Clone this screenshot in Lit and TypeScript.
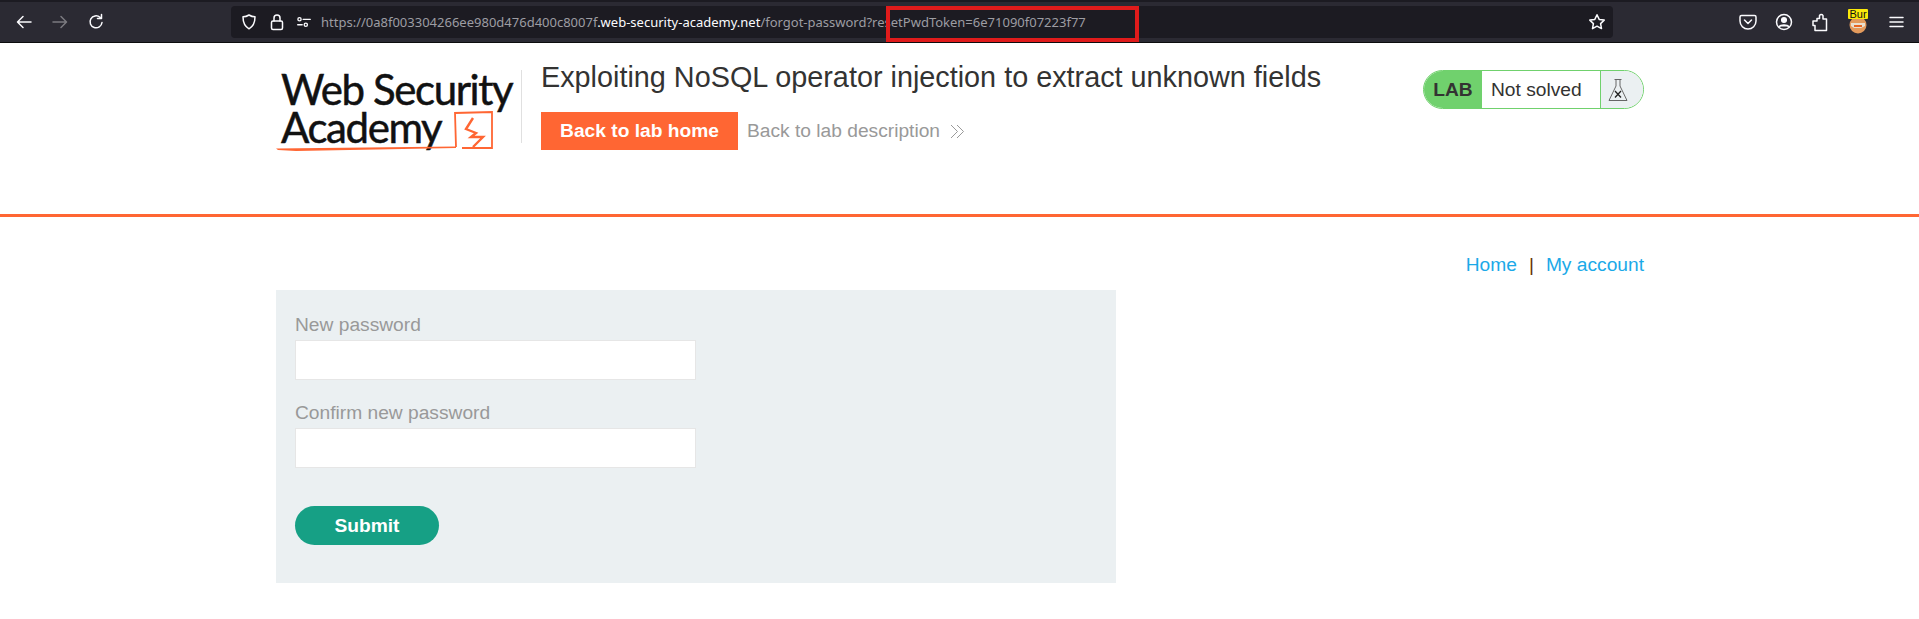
import { LitElement, html, css, svg } from 'lit';
import { customElement } from 'lit/decorators.js';

const icon = (content: unknown, size = 20) => html`
  <svg class="icon" width=${size} height=${size} viewBox="0 0 20 20" fill="none" stroke="currentColor" stroke-width="1.5" stroke-linecap="round" stroke-linejoin="round">${content}</svg>
`;

@customElement('app-root')
export class AppRoot extends LitElement {
  static styles = css`
    :host {
      display: block;
      position: relative;
      height: 619px;
      overflow: hidden;
      background: #fff;
      font-family: 'Liberation Sans', Arial, sans-serif;
    }
    .chrome {
      height: 43px;
      box-sizing: border-box;
      background: #2b2a33;
      border-top: 2px solid #1c1b22;
      border-bottom: 1px solid #0c0c0d;
      display: flex;
      align-items: center;
      color: #fbfbfe;
    }
    .nav {
      width: 231px;
      flex: none;
      display: flex;
      align-items: center;
      gap: 16px;
      padding-left: 14px;
      box-sizing: border-box;
    }
    .nav .off { color: #7b7a80; display: flex; }
    .url {
      width: 1382px;
      height: 32px;
      flex: none;
      box-sizing: border-box;
      background: #1c1b22;
      border-radius: 4px;
      display: flex;
      align-items: center;
      padding: 0 6px 0 8px;
      gap: 8px;
    }
    .url-text {
      flex: 1;
      font-family: 'Noto Sans', sans-serif;
      font-size: 13px;
      color: #9d9da3;
      white-space: nowrap;
    }
    .url-text b { font-weight: 400; color: #fbfbfe; }
    .tools {
      flex: 1;
      display: flex;
      align-items: center;
      justify-content: flex-end;
      gap: 16px;
      padding-right: 13px;
    }
    .ext { position: relative; width: 20px; height: 20px; margin: 0 2px; }
    .ext svg { position: absolute; left: 0; top: 3px; }
    .ext .badge {
      position: absolute;
      left: 0;
      top: -3px;
      width: 20px;
      height: 10px;
      background: #fbe90a;
      color: #111;
      font-size: 11px;
      line-height: 10px;
      border-radius: 1px;
      overflow: hidden;
      text-align: center;
    }
    .highlight {
      position: absolute;
      left: 886px;
      top: 6px;
      width: 253px;
      height: 36px;
      box-sizing: border-box;
      border: 4px solid #e01b1b;
    }
    .wrap {
      width: 1368px;
      margin-left: 276px;
    }
    header.lab {
      height: 171px;
      box-sizing: border-box;
      display: flex;
      align-items: flex-start;
      padding-top: 18px;
    }
    .logo {
      width: 246px;
      height: 73px;
      flex: none;
      box-sizing: border-box;
      border-right: 1px solid #e0e0e0;
      margin-top: 9px;
      position: relative;
      color: #111;
      font-family: Lato, sans-serif;
      font-size: 42px;
      line-height: 38px;
      letter-spacing: -1.4px;
      -webkit-text-stroke: 0.5px #111;
      padding: 0 0 0 5px;
      white-space: nowrap;
    }
    .logo svg { position: absolute; left: 0; top: 0; overflow: visible; }
    .lab-main { margin-left: 19px; flex: 1; }
    h2 {
      margin: 0;
      font-size: 28.8px;
      font-weight: 400;
      line-height: 33px;
      color: #333332;
    }
    .links { display: flex; align-items: center; margin-top: 18px; }
    .home {
      width: 197px;
      height: 38px;
      background: #ff6633;
      color: #fff;
      font-weight: 700;
      font-size: 19.2px;
      display: flex;
      align-items: center;
      justify-content: center;
    }
    .desc { margin-left: 9px; color: #999; font-size: 19.2px; display: flex; align-items: center; gap: 10px; }
    .status {
      flex: none;
      width: 221px;
      height: 39px;
      box-sizing: border-box;
      margin-top: 9px;
      border: 1px solid #70d16d;
      border-radius: 20px;
      display: flex;
      align-items: stretch;
      overflow: hidden;
      font-size: 19.2px;
      color: #333332;
    }
    .status .tag {
      width: 58px;
      background: #70d16d;
      font-weight: 700;
      display: flex;
      align-items: center;
      justify-content: center;
    }
    .status .text { width: 118px; display: flex; align-items: center; padding-left: 9px; box-sizing: border-box; }
    .status .flask {
      flex: 1;
      border-left: 1px solid #70d16d;
      background: #ebf0f2;
      display: flex;
      align-items: center;
      padding-left: 7px;
    }
    .rule { height: 3px; background: #ff6633; }
    nav.account {
      display: flex;
      justify-content: flex-end;
      align-items: center;
      height: 73px;
      box-sizing: border-box;
      padding-top: 23px;
      font-size: 19.2px;
      gap: 12px;
    }
    nav.account a { color: #1ba9e8; text-decoration: none; }
    nav.account span { color: #663300; }
    .panel {
      width: 840px;
      height: 293px;
      box-sizing: border-box;
      background: #ebf0f2;
      padding: 22px 19px 0;
    }
    label { display: block; color: #999; font-size: 19.2px; line-height: 26px; margin-bottom: 2px; }
    .field {
      width: 401px;
      height: 39.5px;
      box-sizing: border-box;
      border: 1px solid #e6e6e6;
      border-radius: 0;
      background: #fff;
      display: block;
      margin-bottom: 20.5px;
      padding: 0;
    }
    .submit {
      margin-top: 38.5px;
      width: 144px;
      height: 39px;
      padding: 0;
      border: 0;
      border-radius: 20px;
      background: #16a085;
      color: #fff;
      font: 700 19.2px 'Liberation Sans', Arial, sans-serif;
      display: block;
    }
  `;

  render() {
    return html`
      <div class="chrome">
        <div class="nav">
          ${icon(svg`<path d="M17 10H4M9 4.500 3.500 10 9 15.500"/>`)}
          <span class="off">${icon(svg`<path d="M3 10h13M11 4.500l5.500 5.500-5.500 5.500"/>`)}</span>
          ${icon(svg`<path d="M16 10.500a6 6 0 1 1-2-5.200M15.500 2.500v4h-4"/>`)}
        </div>
        <div class="url">
          ${icon(svg`<path d="M10 3c2 1.300 4 1.800 6 1.800 0 6-1.600 9.600-6 12-4.400-2.400-6-6-6-12C6 4.800 8 4.300 10 3Z"/>`, 20)}
          ${icon(svg`<rect x="4.500" y="9" width="11" height="8.500" rx="1.500"/><path d="M7 9V6a3 3 0 0 1 6 0v3"/>`, 20)}
          ${icon(svg`<path d="M9 7h8M8 13H3"/><circle cx="5" cy="7" r="1.800"/><circle cx="12" cy="13" r="1.800"/>`, 18)}
          <div class="url-text">https://0a8f003304266ee980d476d400c8007f<b>.web-security-academy.net</b>/forgot-password?resetPwdToken=6e71090f07223f77</div>
          ${icon(svg`<path d="m10 2.800 2.200 4.600 5 .7-3.600 3.500.9 5-4.500-2.400-4.500 2.400.9-5L2.800 8.100l5-.7Z"/>`)}
        </div>
        <div class="tools">
          ${icon(svg`<path d="M3.500 3.500h13a1.500 1.500 0 0 1 1.500 1.500v4a8 8 0 0 1-16 0V5a1.500 1.500 0 0 1 1.500-1.500Z"/><path d="m6.500 8 3.500 3.500L13.500 8"/>`)}
          ${icon(svg`<circle cx="10" cy="10" r="7.500"/><circle cx="10" cy="8" r="2.300" fill="currentColor"/><path d="M5.500 14.500c1-2 8-2 9 0" fill="currentColor"/>`)}
          ${icon(svg`<path d="M5 18.500v-5H3V9h4V6.500h2.500V3.500a2 2 0 0 1 3.500 0v3.500h3.500v11.500Z"/>`)}
          <div class="ext">
            <svg width="20" height="20" viewBox="0 0 20 20">
              <circle cx="10" cy="10" r="8.500" fill="#e39a5c"/>
              <path d="M3 8h14v3l-4 2H6l-3-2Z" fill="#e8e0d0"/>
              <path d="M6 10h8v2H6Z" fill="#e8641f"/>
            </svg>
            <div class="badge">Bur</div>
          </div>
          ${icon(svg`<path d="M4 5.500h13M4 10h13M4 14.500h13"/>`)}
        </div>
      </div>
      <div class="highlight"></div>
      <div class="wrap">
        <header class="lab">
          <div class="logo">
            Web Security<br />Academy
            <svg width="246" height="73" viewBox="0 0 246 73" fill="none" stroke="#ff6633">
              <path d="M0 78.500 180 76.500v1.500L100 79.500 20 81 2 80Z" fill="#ff6633" stroke="none"/>
              <path d="M180 77 179 43l37-1v36h-30" stroke-width="1.800"/>
              <path d="M197 48l-7 11 10 4-5 4h12l-10 10" stroke-width="2.400"/>
            </svg>
          </div>
          <div class="lab-main">
            <h2>Exploiting NoSQL operator injection to extract unknown fields</h2>
            <div class="links">
              <div class="home">Back to lab home</div>
              <div class="desc">
                Back to lab description
                <svg width="15" height="15" viewBox="0 0 15 15" fill="none" stroke="#999"><path d="M1 1l6.500 6.500L1 14M7 1l6.500 6.500L7 14"/></svg>
              </div>
            </div>
          </div>
          <div class="status">
            <div class="tag">LAB</div>
            <div class="text">Not solved</div>
            <div class="flask">
              <svg width="20" height="24" viewBox="0 0 20 24" fill="none" stroke="#666">
                <path d="M6.500 1.500h7M8 1.500v6.500L1 22.500h18L12 8V1.500"/>
                <path d="M7 13l6 6.500M13 13l-6 6.500" stroke="#222" stroke-width="1.300"/>
              </svg>
            </div>
          </div>
        </header>
      </div>
      <div class="rule"></div>
      <div class="wrap">
        <nav class="account"><a>Home</a><span>|</span><a>My account</a></nav>
        <div class="panel">
          <label>New password</label>
          <input class="field" type="password" />
          <label>Confirm new password</label>
          <input class="field" type="password" />
          <button class="submit">Submit</button>
        </div>
      </div>
    `;
  }
}
